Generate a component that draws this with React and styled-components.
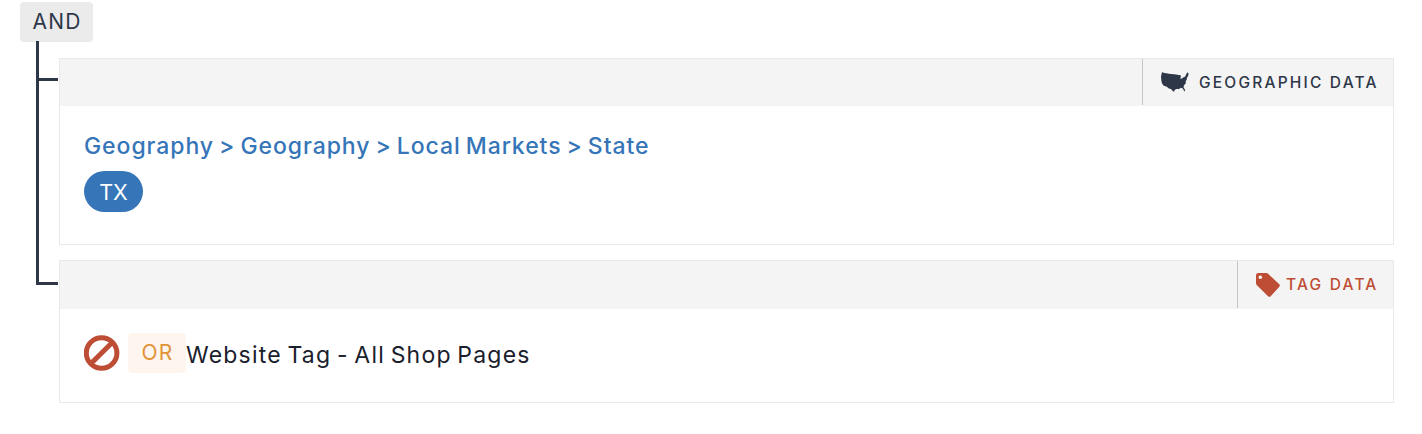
import styled, { createGlobalStyle } from 'styled-components';

const GlobalStyle = createGlobalStyle`
    *{
        box-sizing:border-box;
    }
    body{
        margin:0;
        background:#fff;
        font-family:Inter, "Liberation Sans", sans-serif;
        color:#2d3748;
    }
`
const Group = styled.div`
    width:1422px;
    padding:2px 28px 0 20px;
`
const Operator = styled.span`
    display:flex;
    align-items:center;
    justify-content:center;
    width:${(p) => p.$width}px;
    height:40px;
    padding:0 0 1px 1px;
    border-radius:4px;
    font-size:21px;
    letter-spacing:1.2px;
    color:${(p) => (p.$warm ? '#e09339' : '#2d3748')};
    background:${(p) => (p.$warm ? '#fef6ee' : '#ebebeb')};
`
const Tree = styled.div`
    display:flex;
    margin-top:-1px;
    padding-left:16px;
`
const Rail = styled.div`
    width:22px;
    margin-right:1px;
`
const Branch = styled.div`
    height:${(p) => p.$height}px;
    border-left:3px solid #2d3748;
    border-bottom:3px solid #2d3748;
`
const Cards = styled.div`
    flex:1;
    display:flex;
    flex-direction:column;
    gap:15px;
    padding-top:17px;
`
const Card = styled.section`
    height:${(p) => p.$height}px;
    border:1px solid #e9e9e9;
`
const CardHeader = styled.header`
    display:flex;
    justify-content:flex-end;
    height:${(p) => p.$height}px;
    background:#f4f4f4;
`
const Source = styled.div`
    display:flex;
    align-items:center;
    width:${(p) => p.$width}px;
    height:${(p) => p.$height}px;
    padding-left:18px;
    border-left:1px solid #c6c6c6;
    color:${(p) => p.$color};

    >svg{
        flex:none;
        margin-right:${(p) => p.$gap}px;
    }
    >span{
        font-size:15.5px;
        font-weight:500;
        letter-spacing:2.2px;
        white-space:nowrap;
    }
`
const Path = styled.div`
    padding:24px 24px 0;
    font-size:23px;
    font-weight:500;
    line-height:32px;
    letter-spacing:0.93px;
    word-spacing:-2px;
    color:#3575b8;
    white-space:nowrap;
`
const Pill = styled.span`
    display:flex;
    align-items:center;
    justify-content:center;
    width:59px;
    height:41px;
    margin:9px 0 0 24px;
    border-radius:21px;
    font-size:21.5px;
    color:#fff;
    background:#3575b8;
`
const TagRow = styled.div`
    display:flex;
    align-items:center;
    padding:24px 24px 0;

    >svg{
        margin:0 8px 0 0;
    }
`
const TagName = styled.span`
    padding-top:3px;
    font-size:23px;
    letter-spacing:1.2px;
    word-spacing:-2px;
    color:#1a202c;
    white-space:nowrap;
`

const UsaIcon = () => (
    <svg width="28" height="20" viewBox="33 31 82 58" preserveAspectRatio="none" fill="currentColor">
        <path d="M36 31 L40 33 L56 36 L78 38 L84 40 L90 40 L91 44 L90 51 L95 49 L98 47 L104 44 L107 37 L111 32 L114 36 L112 43 L109 48 L108 54 L105 58 L106 63 L100 70 L99 75 L102 80 L104 86 L101 87 L97 79 L91 77 L86 80 L78 80 L73 83 L71 89 L66 85 L62 80 L56 79 L50 74 L41 71 L36 64 L34 56 L33 44 Z" />
    </svg>
)

const TagIcon = () => (
    <svg width="24" height="24" viewBox="0 0 24 24" fill="currentColor" fillRule="evenodd">
        <path d="M2.4 0H10.4Q11.4 0 12.1 .7L23.3 11.3Q24.4 12.5 23.3 13.7L14.7 23.2Q13.4 24.5 12.1 23.2L.9 12.3Q0 11.4 0 10.3V2.4Q0 0 2.4 0ZM4.3 2.4A1.8 1.8 0 1 0 4.3 6A1.8 1.8 0 1 0 4.3 2.4Z" />
    </svg>
)

const ExcludeIcon = () => (
    <svg width="36" height="36" viewBox="0 0 36 36" fill="none" stroke="#be4d35" strokeWidth="5">
        <circle cx="17.6" cy="18" r="15.3" />
        <path d="M7 28.6L28.2 7.4" />
    </svg>
)

const AudienceRules = ()=>{
    return(
        <Group>
            <GlobalStyle />
            <Operator $width={73}>AND</Operator>
            <Tree>
                <Rail>
                    <Branch $height={40} />
                    <Branch $height={204} />
                </Rail>
                <Cards>
                    <Card $height={187}>
                        <CardHeader $height={47}>
                            <Source $width={251} $height={46} $gap={10} $color="#2d3748">
                                <UsaIcon />
                                <span>GEOGRAPHIC DATA</span>
                            </Source>
                        </CardHeader>
                        <Path>Geography &gt; Geography &gt; Local Markets &gt; State</Path>
                        <Pill>TX</Pill>
                    </Card>
                    <Card $height={143}>
                        <CardHeader $height={48}>
                            <Source $width={156} $height={47} $gap={6} $color="#be4d35">
                                <TagIcon />
                                <span>TAG DATA</span>
                            </Source>
                        </CardHeader>
                        <TagRow>
                            <ExcludeIcon />
                            <Operator $width={58} $warm>OR</Operator>
                            <TagName>Website Tag - All Shop Pages</TagName>
                        </TagRow>
                    </Card>
                </Cards>
            </Tree>
        </Group>
    )
}

export default AudienceRules;
